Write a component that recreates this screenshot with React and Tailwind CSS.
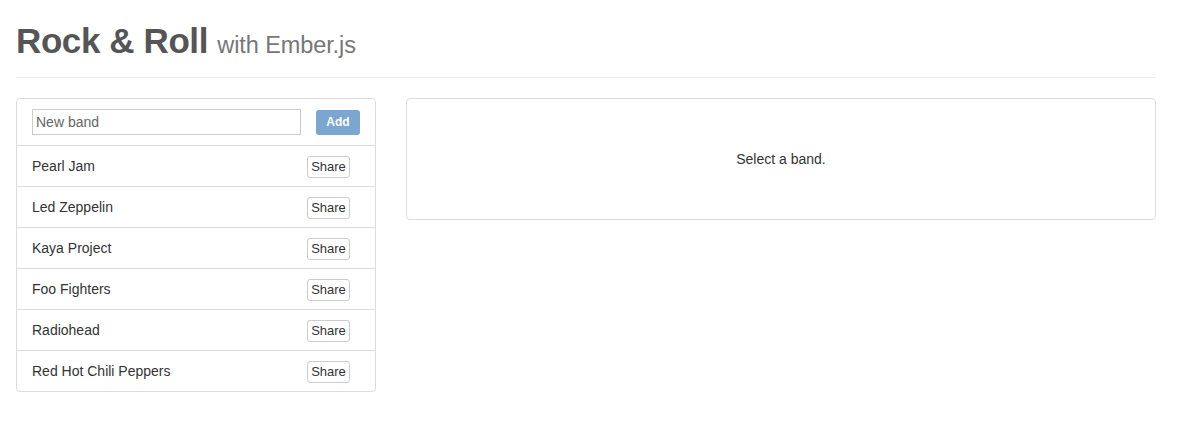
export default function App() {
  const bands = ["Pearl Jam", "Led Zeppelin", "Kaya Project", "Foo Fighters", "Radiohead", "Red Hot Chili Peppers"];
  return (
    <div className="w-[1182px] h-[428px] bg-white px-4 text-[14px] leading-5 text-[#333]" style={{ fontFamily: '"Liberation Sans", Arial, sans-serif' }}>
      <div className="w-[1140px]">
        <div className="pt-[18px] pb-[9px] border-b border-[#eee]">
          <h1 className="text-[35px] leading-[46px] font-bold text-[#555] tracking-[-0.4px]">
            Rock &amp; Roll <small className="text-[23.5px] font-normal text-[#777] tracking-[-0.1px]">with Ember.js</small>
          </h1>
        </div>
        <div className="flex gap-[30px] mt-5">
          <div className="w-[360px] border border-[#ddd] rounded">
            <div className="flex items-center justify-between px-[15px] py-[10px] border-b border-[#ddd]">
              <input
                className="w-[269px] h-[26px] border border-[#ccc] px-[3px] text-[14px] text-[#333] placeholder:text-[#666] outline-none"
                placeholder="New band"
                style={{ fontFamily: '"Liberation Sans", Arial, sans-serif' }}
              />
              <button className="w-[44px] h-[25px] rounded-[3px] bg-[#7aa6d0] text-white text-[12px] font-bold">Add</button>
            </div>
            {bands.map((b, i) => (
              <div key={b} className={`flex items-center justify-between pl-[15px] pr-[25px] ${i < bands.length - 1 ? "h-[41px] border-b border-[#ddd]" : "h-[40px]"}`}>
                <span>{b}</span>
                <button className="w-[43px] h-[22px] mt-[1px] border border-[#ccc] rounded-[3px] bg-white text-[13px] text-[#333]">Share</button>
              </div>
            ))}
          </div>
          <div className="flex-1 h-[122px] border border-[#ddd] rounded flex items-center justify-center">
            <span>Select a band.</span>
          </div>
        </div>
      </div>
    </div>
  );
}
